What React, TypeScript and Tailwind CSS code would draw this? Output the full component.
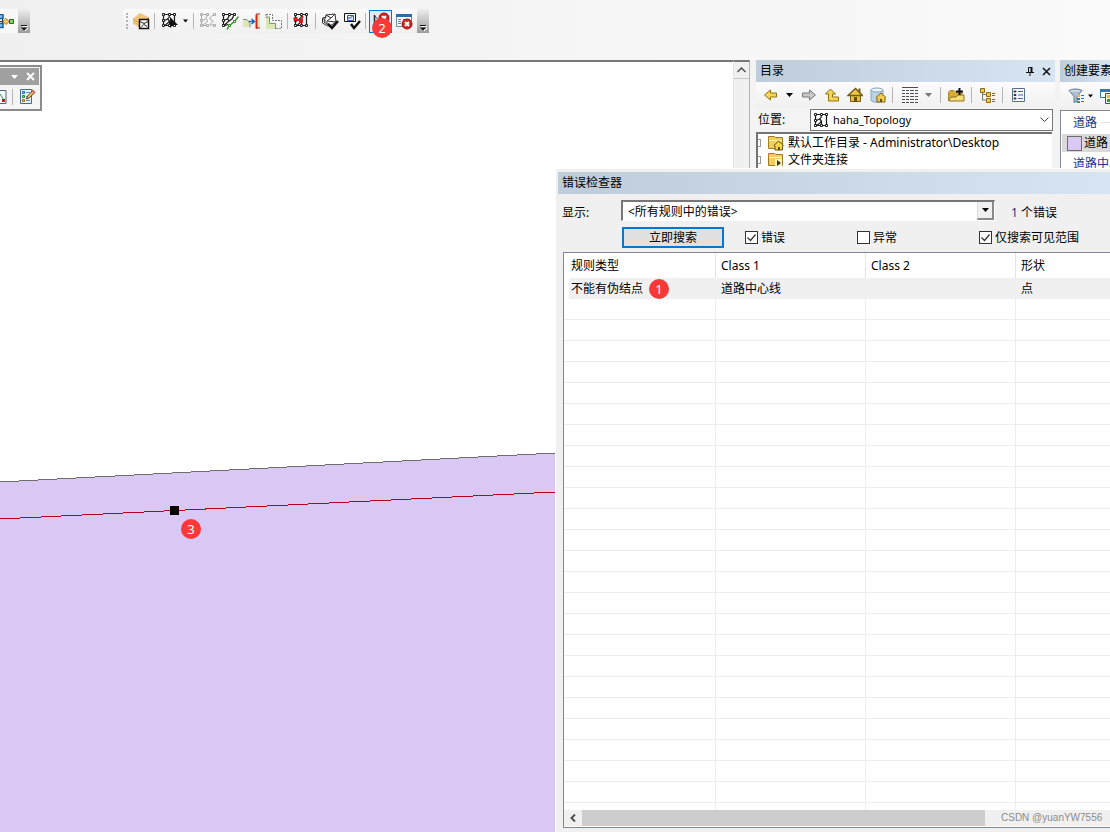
import React from 'react';
import clsx from 'clsx';

type IconProps = { children: React.ReactNode; size?: number; className?: string };

const Icon: React.FC<IconProps> = ({ children, size = 16, className }) => (
  <svg
    width={size}
    height={size}
    viewBox={`0 0 ${size} ${size}`}
    fill="none"
    aria-hidden="true"
    className={clsx('shrink-0', className)}
  >
    {children}
  </svg>
);

// Node-and-edge mesh shared by most of the topology tools
const Mesh: React.FC<{ color?: string }> = ({ color = '#1a1a1a' }) => (
  <g stroke={color}>
    <path d="M4 2.5h8M2.5 4v9M13.5 4v8M4 13.5h9" strokeWidth="1.2" />
    <path d="M8.5 3.5c0 2-1 3-2 3.5L3.5 8.5M6.500 7c1.500 1 2 2 1.500 3l-4 3.500M8.500 8.500v4" strokeWidth="1.2" />
    <path
      d="M1.5 1.5h2v2h-2zM7.5 1.5h2v2h-2zM12.5 1.5h2v2h-2zM1.5 12.5h2v2h-2zM7.5 12.5h2v2h-2zM12.5 12.5h2v2h-2zM1.5 7.5h2v2h-2z"
      fill="#fff"
    />
  </g>
);

const LayerIcon = () => (
  <Icon size={18}>
    <path d="M1 6.500 8 1l9 4.500-8 5z" fill="#f1c478" />
    <path d="m1 6.500 8 4v6l-8-5z" fill="#e0a748" />
    <path d="m9 10.500 8-5v6l-8 5z" fill="#b5761f" />
    <path d="m1 8.500 8 4.500M1 10.500l8 5" stroke="#f8dca0" />
    <path d="M7.500 7.500h9v9h-9z" fill="#fff" stroke="#111" strokeWidth="1.500" />
    <path d="m8 9.500 4 2 4-2M12 11.500c0 2-2 2-3 4m3-3 3 2" stroke="#222" />
  </Icon>
);

const SelectTopologyIcon = () => (
  <Icon size={18}>
    <Mesh />
    <path d="M9 5v11l3-3h5z" fill="#111" />
  </Icon>
);

const GreyMeshIcon = () => (
  <Icon size={18}>
    <g stroke="#a9a9a9">
      <path d="M4 2.5h4M2.500 4v9M4 13.500h4M8.500 3.500 6.500 7l-4 2M7 7l2 2-5 4M15 3c-3 1-4 2-4 4l3 2c0 2-3 2-3 4h4" />
      <path
        d="M1.500 1.500h2v2h-2zM7.500 1.500h2v2h-2zM14.500 1.500h2v2h-2zM1.500 12.500h2v2h-2zM7.500 12.500h2v2h-2zM14.500 12.500h2v2h-2zM1.500 7.500h2v2h-2z"
        fill="#f5f5f5"
      />
    </g>
  </Icon>
);

const ModifyEdgeIcon = () => (
  <Icon size={18}>
    <g stroke="#1a1a1a">
      <path d="M4 2.500h8M2.500 4v9M3 13.500 8 9 6.500 7l-4 1.500M6.500 7l2-4M13 3l-2 4-3 2M4 13.500l3-1" strokeWidth="1.200" />
      <path d="M1.500 1.500h2v2h-2zM7.500 1.500h2v2h-2zM12.500 1.500h2v2h-2zM1.500 7.500h2v2h-2zM1.500 12.500h2v2h-2z" fill="#fff" />
    </g>
    <path d="M17.500 4.500 14 9l-6 5-2 3.500" stroke="#3a9b28" strokeWidth="1.500" />
    <path d="M12.500 8.500h2v2h-2zM7.500 12.500h2v2h-2z" fill="#fff" stroke="#2e8b22" />
  </Icon>
);

const AlignEdgeIcon = () => (
  <Icon size={18}>
    <path d="M0 8h4l3 3v4H0zM13 3h4v12h-4z" fill="#dbe8b5" />
    <path d="M0 7.500h4l3 4v4" stroke="#8a8a8a" />
    <path d="M6 9.500h5M8.500 7l3 2.500-3 2.500" stroke="#1768b8" strokeWidth="1.500" />
    <path d="M13.500 2.500v14" stroke="#d9221c" strokeWidth="2" />
    <path d="M13 2h4M13 16h4" stroke="#8a2a20" />
  </Icon>
);

const GeneralizeIcon = () => (
  <Icon size={18}>
    <path d="M1 5h3v6h6v6H1z" fill="#dbe8b5" />
    <path d="M1 5h3.500v6.500h6V17" stroke="#8a8a8a" />
    <path d="M1 2.500h6.500v6h9V16" stroke="#777" strokeDasharray="2 1" />
    <path d="M1 2v4M11 16.500h5" stroke="#888" strokeDasharray="2 1" />
  </Icon>
);

const RedMeshIcon = () => (
  <Icon size={18}>
    <Mesh />
    <path d="m2 7 6 2 2-5" stroke="#d51b1b" strokeWidth="1.500" />
    <path d="M1 5.500h3v3H1zM6.500 7.500h3v3h-3z" fill="#d51b1b" stroke="#d51b1b" />
  </Icon>
);

const ValidateAreaIcon = () => (
  <Icon size={18}>
    <path d="m5 3 9-1 1 8-6 4-6-4z" fill="#fff" stroke="#333" />
    <path d="m5 3 5 3 4-4M10 6 6 9l9 1M1.500 6l8 8M1.500 6l4-1m-4 1v5l5 3" stroke="#333" />
    <path d="m7 12 4 4 6-7" stroke="#111" strokeWidth="2.500" />
  </Icon>
);

const ValidateExtentIcon = () => (
  <Icon size={18}>
    <path d="M1.500 1.500h11v8h-11z" fill="#fff" stroke="#111" />
    <path d="M4.500 3.500h6v5h-6z" fill="#dcecf9" stroke="#1768b8" />
    <path d="M4.500 6h3l2-2" stroke="#344f73" />
    <path d="m8 12 3 4 6-7" stroke="#111" strokeWidth="2.500" />
  </Icon>
);

const RedCross: React.FC<{ x: number; y: number }> = ({ x, y }) => (
  <g transform={`translate(${x} ${y})`}>
    <circle r="5" fill="#cf2325" stroke="#a51113" />
    <path d="m-2-2 4 4m0-4-4 4" stroke="#fff" strokeWidth="2" />
  </g>
);

const FixErrorIcon = () => (
  <Icon size={18}>
    <path d="M2.500 3v13l3-4 2 4" stroke="#222" strokeWidth="1.500" />
    <path d="m3 4 5 6 1 6" stroke="#444" />
    <RedCross x={12} y={6} />
  </Icon>
);

const ErrorInspectorIcon = () => (
  <Icon size={18}>
    <path d="M1.5 2.5h15v12h-15z" fill="#fff" stroke="#6d89a6" />
    <path d="M1 2h16v3H1z" fill="#2b6cb0" />
    <path d="M3 7.5h3m2 0h7M3 9.5h3m2 0h4M3 11.5h3m2 0h2" stroke="#67809a" />
    <RedCross x={12} y={12} />
  </Icon>
);

const ArrowIcon: React.FC<{ kind: 'back' | 'forward' | 'up' }> = ({ kind }) => (
  <Icon>
    {kind === 'back' && <path d="m1.5 8 6-5v3h6v4h-6v3z" fill="#f4d657" stroke="#927112" />}
    {kind === 'forward' && <path d="m14.5 8-6-5v3h-7v4h7v3z" fill="#c8c8c8" stroke="#777" />}
    {kind === 'up' && <path d="m1.5 7 5-5 5 5h-3v3h6v4h-10V7z" fill="#f4d657" stroke="#927112" />}
  </Icon>
);

const HomeIcon = () => (
  <Icon>
    <path d="M3.5 7.5h10v7h-10z" fill="#e9c03e" stroke="#765b13" />
    <path d="m1 8.500 7.500-7 7 7z" fill="#edc94a" stroke="#765b13" strokeWidth="1.5" />
    <path d="M12.500 1.500v4" stroke="#765b13" strokeWidth="2" />
    <path d="M7 10h3v5H7z" fill="#6a5012" />
  </Icon>
);

const DatabaseHomeIcon = () => (
  <Icon>
    <path d="M1 3v10c0 3 12 3 12 0V3" fill="#bcd3e6" stroke="#8aa6be" />
    <ellipse cx="7" cy="3" rx="6" ry="2" fill="#eaf3fa" stroke="#86a3bc" />
    <path d="m6 10.500 5-4.500 5 4.500-1 .5v4H7v-4z" fill="#efcb4d" stroke="#7f6112" />
    <path d="M10 12h2v3h-2z" fill="#6a5012" />
  </Icon>
);

const ContentsIcon = () => (
  <Icon size={18}>
    <path
      d="M1 1.5h16M1 4.5h3m1 0h3m1 0h4m1 0h3M1 7.5h3m1 0h3m1 0h4m1 0h3M1 10.5h3m1 0h3m1 0h4m1 0h3M1 13.5h3m1 0h3m1 0h4m1 0h3M1 16.5h3m1 0h3m1 0h4m1 0h3"
      stroke="#4e4e4e"
    />
  </Icon>
);

const ConnectFolderIcon = () => (
  <Icon size={18}>
    <path d="M1.5 6.5 3 4.5h4l2 2h6v8H1.5z" fill="#d8ad31" stroke="#a5852e" />
    <path d="m2 14 2-3h5l2-2h6v6H2z" fill="#f5dc74" stroke="#927325" />
    <path d="M9 5.500h7m-3.500-3.500v7" stroke="#111" strokeWidth="2" />
  </Icon>
);

const TreeIcon = () => (
  <Icon>
    <path d="M3.5 4v9H8M4 7.5h4" stroke="#777" />
    <path d="M1.5 1.5h4v4h-4zM7.5 5.5h4v4h-4zM7.5 11.5h4v4h-4z" fill="#edca46" stroke="#8b6b16" />
    <path d="M13 6.5h3m-3 2h3m-3 4h3m-3 2h3" stroke="#287abd" />
  </Icon>
);

const OptionsIcon = () => (
  <Icon>
    <path d="M2.5 1.500h12v13h-12z" fill="#f5f8fb" stroke="#56708b" />
    <path d="M8 4.5h5m-5 3.500h5m-5 3.500h5" stroke="#4e6883" />
    <path d="M4 4h2v1H4zM4 7.500h2v1H4zM4 11h2v1H4z" stroke="#333" />
  </Icon>
);

const FolderIcon: React.FC<{ home?: boolean }> = ({ home }) => (
  <Icon>
    <path d="M.5 3.500v-2h6l1 1h7v11H.5z" fill="#f0cf5c" stroke="#a27a1d" />
    <path d="M1 5.5h13" stroke="#fff3b6" />
    {home ? (
      <>
        <path d="m6 10.500 4.500-4.500 5 4.500-1 .5v4H7v-4z" fill="#f5d54e" stroke="#665012" />
        <path d="M10 12h2v3h-2z" fill="#604812" />
      </>
    ) : (
      <>
        <path d="M7 7h7v7H7z" fill="#fff4b7" />
        <path d="m9 8 4 3-4 3z" fill="#333" />
      </>
    )}
  </Icon>
);

const FilterIcon = () => (
  <Icon>
    <path d="M1 2.5c4-2 9-2 13 0l-5 6v5l-3 1v-6z" fill="#a9bed0" stroke="#647b92" />
    <path d="M2 3h10" stroke="#e6f0f7" />
    <path d="M9 6h3v3H9z" fill="#e7bc35" />
    <path d="M9 10h3v2H9z" fill="#2a77bd" />
    <path d="M9 13h3v2H9z" fill="#5b963a" />
    <path d="M13 7.5h3m-3 3h3m-3 3h3" stroke="#2776bb" />
  </Icon>
);

const TemplateIcon = () => (
  <Icon>
    <path d="M1.5 1.5h13v8h-13z" fill="#fff" stroke="#357bb5" />
    <path d="M1 1h14v3H1z" fill="#2f79b9" />
    <path d="M6.5 5.5h9v10h-9z" fill="#eef5df" stroke="#33536d" />
    <path d="M8 7h3v3H8z" fill="#e5bb2f" />
    <path d="M8 11h3v3H8z" fill="#43963a" />
  </Icon>
);

const ModelIcon = () => (
  <Icon size={15}>
    <path d="M0 7.500h10M2.500 4v7" stroke="#333" />
    <path d="M-1 .5h4v4h-4zM-1 9.500h4v4h-4z" fill="#7fc5f3" stroke="#145e9e" strokeWidth="1.500" />
    <path d="m6 4.500 3 3-3 3-3-3z" fill="#ffd35b" stroke="#936719" />
    <path d="M9.500 5.500h4v4h-4z" fill="#8bcf6a" stroke="#286d1f" />
  </Icon>
);

const AttributesIcon = () => (
  <Icon size={18}>
    <path d="M2.500 1.500h11v14h-11z" fill="#e6f0f9" stroke="#466a8d" />
    <path d="M4.500 3.500h2v2h-2z" stroke="#2d6ba8" fill="#8fc0ea" />
    <path d="M4.500 7.500h2v2h-2z" stroke="#2f7a34" fill="#a3d79a" />
    <path d="M4.500 11.500h2v2h-2z" stroke="#a36c17" fill="#f1cd83" />
    <path d="M8 4.500h4m-4 4h3m-3 4h4" stroke="#668bad" />
    <path d="m8.500 11 1-3 5-5 2 2-5.500 5z" fill="#edbd64" stroke="#62492b" />
    <path d="m14 2 3 3" stroke="#d46c68" strokeWidth="2" />
  </Icon>
);

const Caret: React.FC<{ className?: string }> = ({ className }) => (
  <svg width="7" height="4" viewBox="0 0 7 4" aria-hidden="true" className={clsx('shrink-0', className)}>
    <path d="M0 0h7L3.5 4z" fill="currentColor" />
  </svg>
);

const Separator: React.FC<{ className?: string }> = ({ className }) => (
  <span className={clsx('h-4 w-px shrink-0 bg-[#b5b5b5]', className)} />
);

const ToolButton: React.FC<{ label: string; children: React.ReactNode; className?: string }> = ({
  label,
  children,
  className,
}) => (
  <button type="button" aria-label={label} className={clsx('flex shrink-0 items-center justify-center', className)}>
    {children}
  </button>
);

const OverflowButton: React.FC<{ className?: string }> = ({ className }) => (
  <ToolButton
    label="工具条选项"
    className={clsx('w-3 self-stretch bg-linear-to-b from-[#eeeeee] to-[#9c9c9c]', className)}
  >
    <svg width="8" height="20" viewBox="0 0 8 20" aria-hidden="true">
      <path d="M2 15.500h6M5 20l3-3" stroke="#fff" />
      <path d="M1 14h6v1H1zM1 16.500h6l-3 3z" fill="#111" />
    </svg>
  </ToolButton>
);

const Badge: React.FC<{ value: number; className: string }> = ({ value, className }) => (
  <span
    className={clsx(
      'absolute z-10 flex h-5 w-5 items-center justify-center rounded-full bg-[#fb3838] text-[13px] leading-5 text-white',
      className
    )}
  >
    {value}
  </span>
);

const Toolbars = () => (
  <header className="flex h-[60px] shrink-0 items-start bg-linear-to-r from-[#f0f0f0] to-[#fafafa] pt-[9px]">
    <div className="flex h-6 w-[30px] shrink-0 items-center justify-between bg-[#f8f8f8]">
      <ToolButton label="模型构建器">
        <ModelIcon />
      </ToolButton>
      <OverflowButton />
    </div>
    <div className="ml-[93px] flex h-6 w-[303px] shrink-0 items-center gap-1 rounded bg-linear-to-b from-[#fafafa] to-[#f0f0f0] pl-[3px]">
      <span className="h-4 border-l-2 border-dotted border-[#b4b4b4]" />
      <ToolButton label="选择拓扑"><LayerIcon /></ToolButton>
      <Separator className="mr-px" />
      <ToolButton label="拓扑编辑工具" className="w-[29px] gap-1">
        <SelectTopologyIcon />
        <Caret className="w-[5px]" />
      </ToolButton>
      <Separator className="mr-px" />
      <ToolButton label="修改边"><GreyMeshIcon /></ToolButton>
      <ToolButton label="修整边"><ModifyEdgeIcon /></ToolButton>
      <ToolButton label="对齐边"><AlignEdgeIcon /></ToolButton>
      <ToolButton label="概化边"><GeneralizeIcon /></ToolButton>
      <Separator className="mr-px" />
      <ToolButton label="共享要素"><RedMeshIcon /></ToolButton>
      <Separator className="mr-px" />
      <ToolButton label="验证指定区域"><ValidateAreaIcon /></ToolButton>
      <ToolButton label="验证当前范围"><ValidateExtentIcon /></ToolButton>
      <Separator />
      <div className="relative -mx-px shrink-0">
        <ToolButton label="修复拓扑错误" className="h-[23px] w-[23px] border border-[#0078d7] bg-[#dcebf8]">
          <FixErrorIcon />
        </ToolButton>
        <Badge value={2} className="top-2 left-[3px]" />
      </div>
      <ToolButton label="错误检查器"><ErrorInspectorIcon /></ToolButton>
      <OverflowButton className="ml-auto" />
    </div>
  </header>
);

const MapView = () => (
  <section aria-label="地图" className="relative min-w-0 flex-1 overflow-hidden border-t-2 border-[#777777] bg-white">
    <svg className="absolute inset-0 h-full w-full" aria-hidden="true">
      <path d="M0 420 1110 362V2400H0z" fill="#d9c7f4" />
      <path d="M0 420 1110 362" stroke="#6e6e6e" fill="none" shapeRendering="crispEdges" />
      <path d="M0 457 1110 403" stroke="#b5001c" fill="none" shapeRendering="crispEdges" />
      <path d="M170 444h9v9h-9z" fill="#000" />
    </svg>
    <Badge value={3} className="top-[457px] left-[181px]" />

    <div className="absolute top-[3px] left-0 w-[42px] border-2 border-l-0 border-[#8b8b8b] bg-[#f5f5f5]">
      <div className="mt-px mr-px flex h-[17px] items-center justify-end gap-2 bg-[#a0a0a0] pr-1 text-white">
        <Caret />
        <button type="button" aria-label="关闭工具条">
          <svg width="9" height="9" viewBox="0 0 9 9" aria-hidden="true">
            <path d="m1 1 7 7m0-7-7 7" stroke="#fff" strokeWidth="2" />
          </svg>
        </button>
      </div>
      <div className="flex h-[24px] items-center justify-between pr-1">
        <ToolButton label="编辑折点">
          <svg width="7" height="16" viewBox="0 0 7 16" aria-hidden="true">
            <path d="M-1 1.5h7v13h-7" fill="#f4faff" stroke="#4b6783" />
            <path d="m0 5 4 6" stroke="#399542" />
            <path d="M2 10h3v3H2z" fill="#c9151c" />
          </svg>
        </ToolButton>
        <Separator />
        <ToolButton label="属性"><AttributesIcon /></ToolButton>
      </div>
    </div>
  </section>
);

const PanelTitle: React.FC<{ children: React.ReactNode }> = ({ children }) => (
  <div className="flex h-[22px] shrink-0 items-center justify-between bg-linear-to-r from-[#bfcddb] to-[#d7e4f2] px-1">
    {children}
  </div>
);

const CatalogPanel = () => (
  <aside className="flex w-[299px] shrink-0 flex-col">
    <PanelTitle>
      <h2>目录</h2>
      <div className="flex items-center gap-2">
        <button type="button" aria-label="自动隐藏">
          <svg width="8" height="10" viewBox="0 0 8 10" fill="none" aria-hidden="true">
            <path d="M2.5 6V1.500h3V6M0 6.500h8M4 7v3" stroke="#111" />
            <path d="M5.5 1v5" stroke="#111" strokeWidth="2" />
          </svg>
        </button>
        <button type="button" aria-label="关闭目录">
          <svg width="9" height="9" viewBox="0 0 9 9" aria-hidden="true">
            <path d="m1 1 7 7m0-7-7 7" stroke="#111" strokeWidth="1.5" />
          </svg>
        </button>
      </div>
    </PanelTitle>
    <div className="flex h-[25px] shrink-0 items-center bg-linear-to-b from-[#fcfcfc] to-[#f0f0f0] pl-[7px]">
      <ToolButton label="后退"><ArrowIcon kind="back" /></ToolButton>
      <Caret className="ml-[7px]" />
      <ToolButton label="前进" className="ml-2"><ArrowIcon kind="forward" /></ToolButton>
      <ToolButton label="向上一级" className="ml-[7px]"><ArrowIcon kind="up" /></ToolButton>
      <ToolButton label="默认工作目录" className="ml-[7px]"><HomeIcon /></ToolButton>
      <ToolButton label="默认地理数据库" className="ml-[7px]"><DatabaseHomeIcon /></ToolButton>
      <Separator className="ml-[6px]" />
      <ToolButton label="内容视图" className="mx-2 gap-[6px] text-[#777777]">
        <ContentsIcon />
        <Caret />
      </ToolButton>
      <Separator />
      <ToolButton label="连接到文件夹" className="mx-[6px]"><ConnectFolderIcon /></ToolButton>
      <Separator />
      <ToolButton label="目录树" className="mx-[7px]"><TreeIcon /></ToolButton>
      <Separator />
      <ToolButton label="选项" className="ml-[7px]"><OptionsIcon /></ToolButton>
    </div>
    <div className="flex h-[25px] shrink-0 items-center px-[2px]">
      <label htmlFor="location" className="w-[52px]">位置:</label>
      <div className="relative flex h-[22px] min-w-0 flex-1 items-center border border-[#777777] bg-white pl-[2px]">
        <Icon><Mesh /></Icon>
        <select
          id="location"
          className="h-full min-w-0 flex-1 appearance-none bg-transparent pl-1 text-[11px] outline-none"
        >
          <option>haha_Topology</option>
        </select>
        <svg width="9" height="6" viewBox="0 0 9 6" fill="none" aria-hidden="true" className="mr-[3px]">
          <path d="m0.5 0.5 4 4 4-4" stroke="#444" />
        </svg>
      </div>
    </div>
    <ul className="mr-[3px] min-h-0 flex-1 overflow-hidden border-t-2 border-l-2 border-[#747474] bg-white">
      {['默认工作目录 - Administrator\\Desktop', '文件夹连接'].map((name, index) => (
        <li key={name} className="flex h-[17px] items-center">
          <span className="mr-[7px] h-2 w-[3px] border border-l-0 border-[#999999]" />
          <FolderIcon home={index === 0} />
          <span className="ml-1 whitespace-nowrap">{name}</span>
        </li>
      ))}
    </ul>
  </aside>
);

const CreateFeaturesPanel = () => (
  <aside className="ml-[5px] flex w-[50px] shrink-0 flex-col overflow-hidden whitespace-nowrap">
    <PanelTitle>
      <h2>创建要素</h2>
    </PanelTitle>
    <div className="flex h-7 shrink-0 items-center gap-1 bg-linear-to-b from-[#fcfcfc] to-[#f0f0f0] pl-2">
      <ToolButton label="过滤器" className="gap-1">
        <FilterIcon />
        <Caret className="w-[5px]" />
      </ToolButton>
      <ToolButton label="组织模板" className="ml-[2px]"><TemplateIcon /></ToolButton>
    </div>
    <div className="min-h-0 flex-1 overflow-hidden border-t border-l border-[#828790] bg-white">
      <h3 className="ml-3 flex h-[23px] items-center gap-1 text-[#1e3287]">
        道路<span className="h-px w-5 bg-[#e2e2e2]" />
      </h3>
      <div className="ml-px flex h-[18px] items-center gap-[2px] bg-[#d9d9d9] pl-[5px]">
        <span className="h-[15px] w-[15px] shrink-0 border border-[#6e6e6e] bg-[#d9c7f4]" />
        道路
      </div>
      <h3 className="ml-3 flex h-[23px] items-center text-[#1e3287]">道路中心线</h3>
    </div>
  </aside>
);

const CheckBox: React.FC<{ id: string; label: string; checked?: boolean; className?: string }> = ({
  id,
  label,
  checked,
  className,
}) => (
  <div className={clsx('flex shrink-0 items-center gap-[3px]', className)}>
    <span className="relative h-[13px] w-[13px]">
      <input
        id={id}
        type="checkbox"
        defaultChecked={checked}
        className="peer block h-[13px] w-[13px] appearance-none border border-[#333333] bg-white"
      />
      <svg
        viewBox="0 0 13 13"
        fill="none"
        aria-hidden="true"
        className="pointer-events-none invisible absolute inset-0 peer-checked:visible"
      >
        <path d="m2.5 6.5 3 3 5-6" stroke="#333" strokeWidth="1.2" />
      </svg>
    </span>
    <label htmlFor={id}>{label}</label>
  </div>
);

const columns = ['规则类型', 'Class 1', 'Class 2', '形状'];
const emptyRows = Array.from({ length: 60 }, (_, i) => i);

const ErrorTable = () => (
  <div className="relative min-h-0 flex-1 overflow-hidden">
    <table className="w-full table-fixed border-separate border-spacing-0 text-left">
      <colgroup>
        <col className="w-[152px]" />
        <col className="w-[150px]" />
        <col className="w-[150px]" />
        <col />
      </colgroup>
      <thead>
        <tr className="h-[25px]">
          {columns.map((name, index) => (
            <th
              key={name}
              className={clsx(
                'py-0 font-normal',
                index === 0 ? 'pl-[7px]' : 'pl-[5px]',
                index < 3 && 'border-r border-[#e5e5e5]'
              )}
            >
              {name}
            </th>
          ))}
        </tr>
      </thead>
      <tbody>
        <tr className="h-[21px] bg-[#f0f0f0]">
          <td className="border-l-[5px] border-white py-0 pl-[2px]">
            <span className="relative">
              不能有伪结点
              <Badge value={1} className="-top-px left-[78px]" />
            </span>
          </td>
          <td className="py-0 pl-[5px]">道路中心线</td>
          <td />
          <td className="py-0 pl-[5px]">点</td>
        </tr>
        {emptyRows.map((row) => (
          <tr key={row} className="h-[21px]">
            <td className="border-r border-b border-[#ededed]" />
            <td className="border-r border-b border-[#ededed]" />
            <td className="border-r border-b border-[#ededed]" />
            <td className="border-b border-[#ededed]" />
          </tr>
        ))}
      </tbody>
    </table>
  </div>
);

const ErrorInspector = () => (
  <section
    aria-label="错误检查器"
    className="absolute top-[168px] right-0 bottom-0 left-[555px] z-20 flex flex-col overflow-hidden border-t border-l border-white bg-[#f0f0f0] pt-[3px] pl-[2px]"
  >
    <PanelTitle>
      <h2>错误检查器</h2>
    </PanelTitle>
    <div className="mt-[6px] flex h-[21px] shrink-0 items-center pl-1">
      <label htmlFor="rule" className="w-[59px] shrink-0 pt-1">显示:</label>
      <div className="flex h-[21px] w-[374px] shrink-0 border border-t-2 border-l-2 border-[#777777] border-r-white border-b-white bg-white">
        <select id="rule" className="min-w-0 flex-1 appearance-none bg-white pt-px pl-[5px] outline-none">
          <option>&lt;所有规则中的错误&gt;</option>
        </select>
        <span className="flex w-[17px] items-center justify-center border-r-2 border-b-2 border-l border-[#8a8a8a] border-l-[#dddddd] bg-[#f0f0f0]">
          <Caret />
        </span>
      </div>
      <output htmlFor="rule" className="ml-4 pt-1 whitespace-nowrap">
        <span className="text-[#1e3287]">1</span> 个错误
      </output>
    </div>
    <div className="mt-[6px] flex h-[21px] shrink-0 items-center pl-[64px]">
      <button
        type="button"
        className="h-[21px] w-[102px] shrink-0 border-2 border-[#0078d7] bg-[#e1e1e1] pt-px leading-4"
      >
        立即搜索
      </button>
      <CheckBox id="errors" label="错误" checked className="ml-[21px] w-[112px]" />
      <CheckBox id="exceptions" label="异常" className="w-[122px]" />
      <CheckBox id="visible" label="仅搜索可见范围" checked />
    </div>
    <div className="mt-1 mb-1 ml-[5px] flex min-h-0 flex-1 flex-col border border-r-0 border-[#828790] bg-white pb-px">
      <ErrorTable />
      <div className="flex h-4 shrink-0 items-center bg-[#f0f0f0]">
        <button type="button" aria-label="向左滚动" className="flex h-4 w-[18px] shrink-0 items-center justify-center">
          <svg width="6" height="8" viewBox="0 0 6 8" fill="none" aria-hidden="true">
            <path d="M5 0.5 1.5 4 5 7.500" stroke="#505050" strokeWidth="2" />
          </svg>
        </button>
        <span className="h-4 flex-1 bg-[#cdcdcd]" />
        <span className="w-[125px] shrink-0 pl-4 font-['Liberation_Sans',sans-serif] text-[10px] leading-4 whitespace-nowrap text-[#8c8c8c]">
          CSDN @yuanYW7556
        </span>
      </div>
    </div>
  </section>
);

export default function App() {
  return (
    <div className="relative flex h-screen w-full flex-col overflow-hidden bg-[#f3f3f3] font-['Noto_Sans','Noto_Sans_CJK_SC',sans-serif] text-[12px] leading-4 text-black">
      <Toolbars />
      <main className="flex min-h-0 flex-1">
        <MapView />
        <div className="mr-[6px] w-[17px] shrink-0 border-t-2 border-r border-l border-t-[#777777] border-r-[#b5b5b5] border-l-[#e3e3e3] bg-[#f0f0f0]">
          <button
            type="button"
            aria-label="向上滚动"
            className="flex h-[17px] w-full items-center justify-center border-b border-[#c8c8c8]"
          >
            <svg width="9" height="6" viewBox="0 0 9 6" fill="none" aria-hidden="true">
              <path d="m0.5 5 4-4 4 4" stroke="#505050" strokeWidth="1.5" />
            </svg>
          </button>
        </div>
        <CatalogPanel />
        <CreateFeaturesPanel />
      </main>
      <ErrorInspector />
    </div>
  );
}
